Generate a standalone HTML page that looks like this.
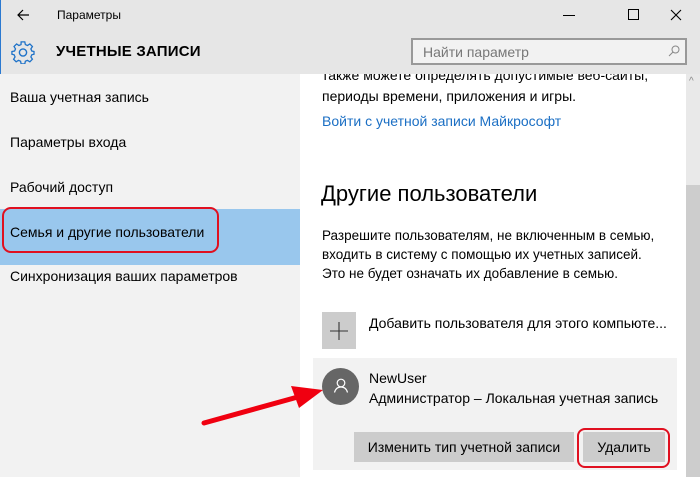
<!DOCTYPE html>
<html><head><meta charset="utf-8"><style>
*{margin:0;padding:0;box-sizing:border-box}
body{width:700px;height:477px;overflow:hidden;font-family:"Liberation Sans","DejaVu Sans",sans-serif;color:#000;background:#fff;position:relative}
.a{position:absolute;white-space:nowrap}
</style></head><body>
<div class="a" style="left:0;top:0;width:700px;height:74px;background:#e6e6e6"></div>
<div class="a" style="left:0;top:0;width:1px;height:477px;background:#2b79d0"></div>
<div class="a" style="left:0;top:74px;width:300px;height:403px;background:#f2f2f2"></div>
<div class="a" style="left:0;top:209px;width:300px;height:56px;background:#99c7ed"></div>
<div class="a" style="left:686px;top:74px;width:14px;height:403px;background:#e9e9e9"></div>
<div class="a" style="left:686px;top:185px;width:14px;height:292px;background:#cdcdcd"></div>
<div class="a" style="left:689px;top:76px;font-size:10px;color:#888">^</div>
<!-- title bar -->
<svg class="a" style="left:16px;top:8px" width="14" height="14" viewBox="0 0 14 14"><path d="M13 7H2M7 2L2 7l5 5" stroke="#000" stroke-width="1.2" fill="none"/></svg>
<div class="a" style="left:57px;top:8px;font-size:12px">Параметры</div>
<div class="a" style="left:563px;top:15px;width:12px;height:1px;background:#000"></div>
<div class="a" style="left:628px;top:9px;width:11px;height:11px;border:1px solid #000"></div>
<svg class="a" style="left:670px;top:9px" width="12" height="12"><path d="M1 1L11 11M11 1L1 11" stroke="#000" stroke-width="1.1"/></svg>
<!-- header -->
<svg class="a" style="left:11px;top:40px" width="24" height="24" viewBox="0 0 24 24"><path d="M10 2h4l.6 3 2.3 1 2.6-1.7 2.8 2.8L20.6 9.7l1 2.3 2.4.5v3l-2.4.6-1 2.3 1.7 2.5-2.8 2.8-2.6-1.6-2.3 1-.6 2.9h-4l-.6-2.9-2.3-1-2.5 1.6-2.8-2.8 1.6-2.5-1-2.3L0 15.5v-3l2.9-.5 1-2.3L2.3 7.1l2.8-2.8 2.5 1.7 2.3-1z" transform="scale(.92) translate(1,0)" fill="none" stroke="#1e72c8" stroke-width="1.4"/><circle cx="12" cy="12.5" r="3.6" fill="none" stroke="#1e72c8" stroke-width="1.4"/></svg>
<div class="a" style="left:56px;top:43px;font-size:15px;font-weight:bold;letter-spacing:.2px">УЧЕТНЫЕ ЗАПИСИ</div>
<div class="a" style="left:411px;top:38px;width:276px;height:27px;border:2px solid #999;background:#f2f2f2"></div>
<div class="a" style="left:423px;top:44px;font-size:14px;color:#777">Найти параметр</div>
<svg class="a" style="left:668px;top:45px" width="12" height="12"><circle cx="7.5" cy="4.5" r="3.5" fill="none" stroke="#888"/><path d="M5 7L1 11" stroke="#888"/></svg>
<!-- left nav -->
<div class="a" style="left:10px;top:89px;font-size:14px">Ваша учетная запись</div>
<div class="a" style="left:10px;top:134px;font-size:14px">Параметры входа</div>
<div class="a" style="left:10px;top:179px;font-size:14px">Рабочий доступ</div>
<div class="a" style="left:10px;top:224px;font-size:14px">Семья и другие пользователи</div>
<div class="a" style="left:10px;top:268px;font-size:14px">Синхронизация ваших параметров</div>
<div class="a" style="left:2px;top:207px;width:217px;height:46px;border:2px solid #e01020;border-radius:9px"></div>
<!-- right content -->
<div class="a" style="left:300px;top:74px;width:386px;height:40px;overflow:hidden">
<div class="a" style="left:22px;top:-9px;font-size:14px;line-height:21px">также можете определять допустимые веб-сайты,<br>периоды времени, приложения и игры.</div>
</div>
<div class="a" style="left:322px;top:113px;font-size:14px;color:#1b6fc4">Войти с учетной записи Майкрософт</div>
<div class="a" style="left:321px;top:181px;font-size:22px;font-weight:normal">Другие пользователи</div>
<div class="a" style="left:322px;top:226px;font-size:13.5px;line-height:19px">Разрешите пользователям, не включенным в семью,<br>входить в систему с помощью их учетных записей.<br>Это не будет означать их добавление в семью.</div>
<div class="a" style="left:322px;top:312px;width:34px;height:37px;background:#cccccc"></div>
<svg class="a" style="left:330px;top:322px" width="18" height="18"><path d="M9 0v18M0 9h18" stroke="#333" stroke-width="1.1"/></svg>
<div class="a" style="left:369px;top:315px;font-size:14px">Добавить пользователя для этого компьюте...</div>
<div class="a" style="left:313px;top:358px;width:364px;height:112px;background:#f2f2f2"></div>
<div class="a" style="left:322px;top:368px;width:37px;height:37px;border-radius:50%;background:#666"></div>
<svg class="a" style="left:332px;top:377px" width="18" height="18"><circle cx="9" cy="6" r="3.8" fill="none" stroke="#fff" stroke-width="1.2"/><path d="M2.5 15.5c1-4 3.5-5.5 6.5-5.5s5.5 1.5 6.5 5.5" fill="none" stroke="#fff" stroke-width="1.2"/></svg>
<div class="a" style="left:369px;top:370px;font-size:14px">NewUser</div>
<div class="a" style="left:369px;top:390px;font-size:14px">Администратор – Локальная учетная запись</div>
<div class="a" style="left:354px;top:432px;width:220px;height:30px;background:#cccccc;font-size:14px;text-align:center;line-height:30px">Изменить тип учетной записи</div>
<div class="a" style="left:583px;top:432px;width:82px;height:30px;background:#cccccc;font-size:14px;text-align:center;line-height:30px">Удалить</div>
<div class="a" style="left:577px;top:428px;width:93px;height:40px;border:2px solid #e01020;border-radius:8px"></div>
<svg class="a" style="left:195px;top:380px" width="135" height="50"><path d="M9 43L110 15" stroke="#f00010" stroke-width="5" stroke-linecap="round"/><path d="M96 6L128 10 104 28z" fill="#f00010"/></svg>
</body></html>
